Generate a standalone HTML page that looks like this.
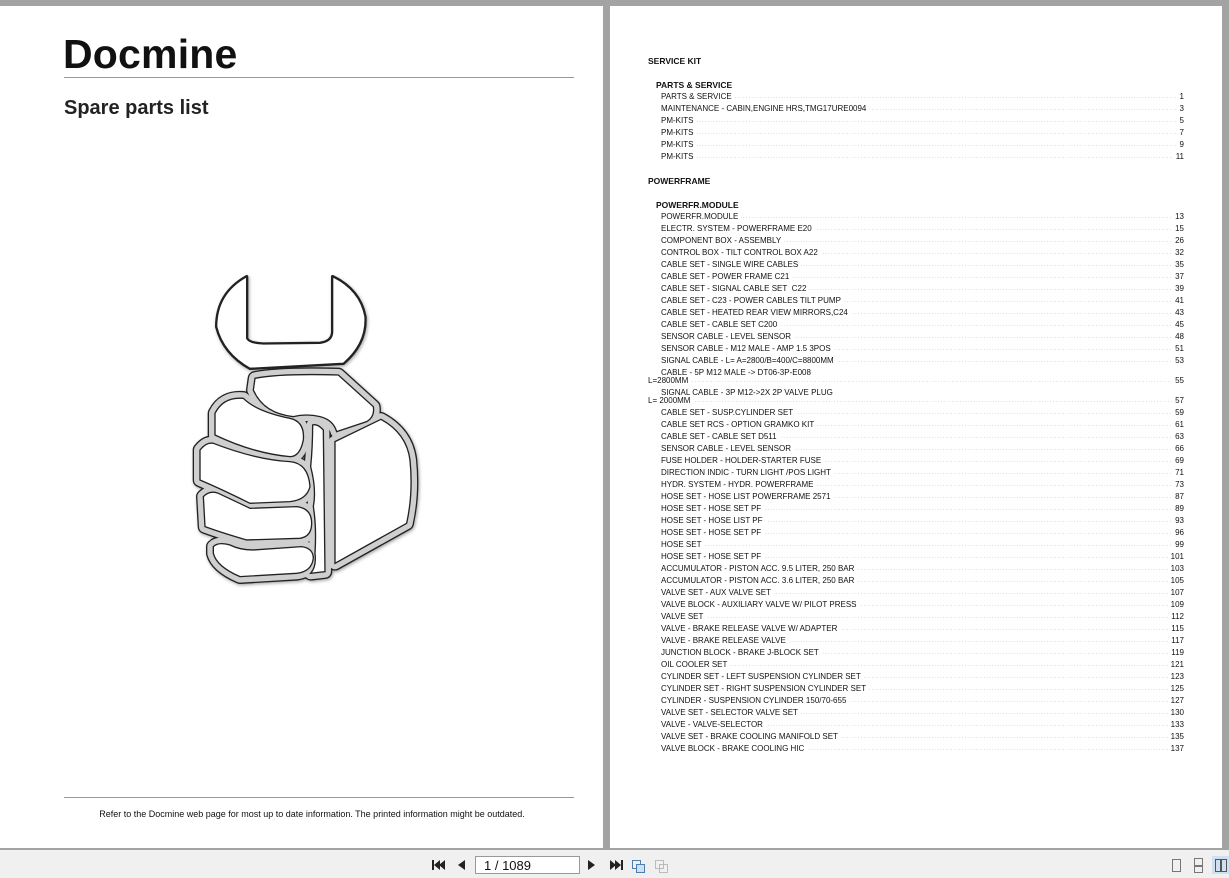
<!DOCTYPE html>
<html><head><meta charset="utf-8"><style>
*{margin:0;padding:0;box-sizing:border-box}
body{width:1229px;height:878px;background:#a3a3a3;position:relative;overflow:hidden;font-family:"Liberation Sans",Arial,sans-serif;color:#111}
.pg{position:absolute;background:#fff}
.t{position:absolute;font-size:8px;white-space:nowrap;line-height:10px}
.row{position:absolute;left:661px;width:523px;font-size:8px;line-height:10px;height:10px;overflow:hidden;white-space:nowrap}
.row .n{position:absolute;right:0;top:0;background:#fff;padding-left:3px}
.row .l{background:#fff;padding-right:3px;position:relative;z-index:1}
.row:before{content:". . . . . . . . . . . . . . . . . . . . . . . . . . . . . . . . . . . . . . . . . . . . . . . . . . . . . . . . . . . . . . . . . . . . . . . . . . . . . . . . . . . . . . . . . . . . . . . . . . . . . . . . . . . . . . . . . . . . . . . . . . . . . . . . . . . . . . . . . . . . . . . . . . . . . . . . . . . . . . . . . . . . . . . . . . . . . . . . . . . . . . . . . . . . . . . . . . .";position:absolute;left:0;top:0;color:#bbb;letter-spacing:-0.3px;font-size:6px}
.h{position:absolute;font-size:8.5px;font-weight:bold}
#tb{position:absolute;left:0;top:850px;width:1229px;height:28px;background:#f0f0f0}
</style></head><body>
<div class="pg" style="left:0;top:6px;width:603px;height:842px"></div>
<div class="pg" style="left:610px;top:6px;width:612px;height:842px"></div>

<div style="position:absolute;left:63px;top:31px;font-size:41px;font-weight:bold;letter-spacing:0.2px">Docmine</div>
<div style="position:absolute;left:64px;top:77px;width:510px;height:1px;background:#999"></div>
<div style="position:absolute;left:64px;top:97px;font-size:20px;font-weight:bold;color:#222">Spare parts list</div>
<div style="position:absolute;left:64px;top:797px;width:510px;height:1px;background:#999"></div>
<div style="position:absolute;left:0;width:624px;top:809px;font-size:9px;text-align:center">Refer to the Docmine web page for most up to date information. The printed information might be outdated.</div>

<svg style="position:absolute;left:0;top:0" width="603" height="848">
<defs>
<filter id="sh" x="-20%" y="-20%" width="140%" height="140%"><feDropShadow dx="3" dy="4" stdDeviation="5" flood-color="#000" flood-opacity="0.35"/></filter>
<g id="hand">
<path d="M225,355 Q300,340 475,345 L580,440 Q585,470 560,485 L470,515 Q460,480 420,470 Q380,460 340,470 Q250,460 220,390 Z"/>
<path d="M105,460 Q130,410 190,415 Q230,455 330,475 Q375,485 370,540 Q360,590 330,590 Q220,580 105,525 Z"/>
<path d="M60,570 Q80,545 100,550 Q230,600 330,605 Q385,610 390,680 Q380,720 330,725 L210,730 Q130,690 60,660 Z"/>
<path d="M70,710 Q90,690 115,700 Q200,740 210,745 L350,740 Q395,745 395,790 Q395,830 360,835 L200,840 Q130,820 75,800 Z"/>
<path d="M100,860 Q115,845 150,855 Q180,870 220,870 L365,860 Q400,865 400,895 Q395,935 350,940 L180,950 Q110,920 100,880 Z"/>
<path d="M398,495 Q412,490 430,510 L435,935 L392,940 Q410,920 405,880 Q410,800 400,740 Q410,690 392,620 Q398,560 398,495 Z"/>
<path d="M465,545 L603,478 Q680,520 690,600 Q700,700 680,790 L465,910 Z"/>
</g>
<path id="wr" d="M200,50 L200,235 Q205,250 250,252 L420,250 Q458,245 458,215 L458,50 Q540,90 555,170 Q560,250 490,310 L210,325 Q130,280 110,200 Q110,100 200,50 Z"/>
</defs>
<g transform="translate(180,260) scale(0.3333)">
<g filter="url(#sh)">
<use href="#hand" fill="#222" stroke="#222" stroke-width="44" stroke-linejoin="round"/>
<use href="#wr" fill="#222" stroke="#222" stroke-width="10" stroke-linejoin="round"/>
</g>
<use href="#hand" fill="#cfcfcf" stroke="#cfcfcf" stroke-width="36" stroke-linejoin="round"/>
<use href="#wr" fill="#fff" stroke="#222" stroke-width="4"/>
<use href="#hand" fill="#fff" stroke="#222" stroke-width="4"/>
</g></svg>

<div class="h" style="left:648px;top:56px">SERVICE KIT</div>
<div class="h" style="left:656px;top:80px">PARTS &amp; SERVICE</div>
<div class="h" style="left:648px;top:176px">POWERFRAME</div>
<div class="h" style="left:656px;top:200px">POWERFR.MODULE</div>

<div class="row" style="top:92px"><span class="l">PARTS &amp; SERVICE</span><span class="n">1</span></div>
<div class="row" style="top:104px"><span class="l">MAINTENANCE - CABIN,ENGINE HRS,TMG17URE0094</span><span class="n">3</span></div>
<div class="row" style="top:116px"><span class="l">PM-KITS</span><span class="n">5</span></div>
<div class="row" style="top:128px"><span class="l">PM-KITS</span><span class="n">7</span></div>
<div class="row" style="top:140px"><span class="l">PM-KITS</span><span class="n">9</span></div>
<div class="row" style="top:152px"><span class="l">PM-KITS</span><span class="n">11</span></div>

<div class="row" style="top:212px"><span class="l">POWERFR.MODULE</span><span class="n">13</span></div>
<div class="row" style="top:224px"><span class="l">ELECTR. SYSTEM - POWERFRAME E20</span><span class="n">15</span></div>
<div class="row" style="top:236px"><span class="l">COMPONENT BOX - ASSEMBLY</span><span class="n">26</span></div>
<div class="row" style="top:248px"><span class="l">CONTROL BOX - TILT CONTROL BOX A22</span><span class="n">32</span></div>
<div class="row" style="top:260px"><span class="l">CABLE SET - SINGLE WIRE CABLES</span><span class="n">35</span></div>
<div class="row" style="top:272px"><span class="l">CABLE SET - POWER FRAME C21</span><span class="n">37</span></div>
<div class="row" style="top:284px"><span class="l">CABLE SET - SIGNAL CABLE SET&nbsp; C22</span><span class="n">39</span></div>
<div class="row" style="top:296px"><span class="l">CABLE SET - C23 - POWER CABLES TILT PUMP</span><span class="n">41</span></div>
<div class="row" style="top:308px"><span class="l">CABLE SET - HEATED REAR VIEW MIRRORS,C24</span><span class="n">43</span></div>
<div class="row" style="top:320px"><span class="l">CABLE SET - CABLE SET C200</span><span class="n">45</span></div>
<div class="row" style="top:332px"><span class="l">SENSOR CABLE - LEVEL SENSOR</span><span class="n">48</span></div>
<div class="row" style="top:344px"><span class="l">SENSOR CABLE - M12 MALE - AMP 1.5 3POS</span><span class="n">51</span></div>
<div class="row" style="top:356px"><span class="l">SIGNAL CABLE - L= A=2800/B=400/C=8800MM</span><span class="n">53</span></div>
<div class="t" style="left:661px;top:368px">CABLE - 5P M12 MALE -&gt; DT06-3P-E008</div>
<div class="row" style="top:376px;left:648px;width:536px"><span class="l">L=2800MM</span><span class="n">55</span></div>
<div class="t" style="left:661px;top:388px">SIGNAL CABLE - 3P M12-&gt;2X 2P VALVE PLUG</div>
<div class="row" style="top:396px;left:648px;width:536px"><span class="l">L= 2000MM</span><span class="n">57</span></div>
<div class="row" style="top:408px"><span class="l">CABLE SET - SUSP.CYLINDER SET</span><span class="n">59</span></div>
<div class="row" style="top:420px"><span class="l">CABLE SET RCS - OPTION GRAMKO KIT</span><span class="n">61</span></div>
<div class="row" style="top:432px"><span class="l">CABLE SET - CABLE SET D511</span><span class="n">63</span></div>
<div class="row" style="top:444px"><span class="l">SENSOR CABLE - LEVEL SENSOR</span><span class="n">66</span></div>
<div class="row" style="top:456px"><span class="l">FUSE HOLDER - HOLDER-STARTER FUSE</span><span class="n">69</span></div>
<div class="row" style="top:468px"><span class="l">DIRECTION INDIC - TURN LIGHT /POS LIGHT</span><span class="n">71</span></div>
<div class="row" style="top:480px"><span class="l">HYDR. SYSTEM - HYDR. POWERFRAME</span><span class="n">73</span></div>
<div class="row" style="top:492px"><span class="l">HOSE SET - HOSE LIST POWERFRAME 2571</span><span class="n">87</span></div>
<div class="row" style="top:504px"><span class="l">HOSE SET - HOSE SET PF</span><span class="n">89</span></div>
<div class="row" style="top:516px"><span class="l">HOSE SET - HOSE LIST PF</span><span class="n">93</span></div>
<div class="row" style="top:528px"><span class="l">HOSE SET - HOSE SET PF</span><span class="n">96</span></div>
<div class="row" style="top:540px"><span class="l">HOSE SET</span><span class="n">99</span></div>
<div class="row" style="top:552px"><span class="l">HOSE SET - HOSE SET PF</span><span class="n">101</span></div>
<div class="row" style="top:564px"><span class="l">ACCUMULATOR - PISTON ACC. 9.5 LITER, 250 BAR</span><span class="n">103</span></div>
<div class="row" style="top:576px"><span class="l">ACCUMULATOR - PISTON ACC. 3.6 LITER, 250 BAR</span><span class="n">105</span></div>
<div class="row" style="top:588px"><span class="l">VALVE SET - AUX VALVE SET</span><span class="n">107</span></div>
<div class="row" style="top:600px"><span class="l">VALVE BLOCK - AUXILIARY VALVE W/ PILOT PRESS</span><span class="n">109</span></div>
<div class="row" style="top:612px"><span class="l">VALVE SET</span><span class="n">112</span></div>
<div class="row" style="top:624px"><span class="l">VALVE - BRAKE RELEASE VALVE W/ ADAPTER</span><span class="n">115</span></div>
<div class="row" style="top:636px"><span class="l">VALVE - BRAKE RELEASE VALVE</span><span class="n">117</span></div>
<div class="row" style="top:648px"><span class="l">JUNCTION BLOCK - BRAKE J-BLOCK SET</span><span class="n">119</span></div>
<div class="row" style="top:660px"><span class="l">OIL COOLER SET</span><span class="n">121</span></div>
<div class="row" style="top:672px"><span class="l">CYLINDER SET - LEFT SUSPENSION CYLINDER SET</span><span class="n">123</span></div>
<div class="row" style="top:684px"><span class="l">CYLINDER SET - RIGHT SUSPENSION CYLINDER SET</span><span class="n">125</span></div>
<div class="row" style="top:696px"><span class="l">CYLINDER - SUSPENSION CYLINDER 150/70-655</span><span class="n">127</span></div>
<div class="row" style="top:708px"><span class="l">VALVE SET - SELECTOR VALVE SET</span><span class="n">130</span></div>
<div class="row" style="top:720px"><span class="l">VALVE - VALVE-SELECTOR</span><span class="n">133</span></div>
<div class="row" style="top:732px"><span class="l">VALVE SET - BRAKE COOLING MANIFOLD SET</span><span class="n">135</span></div>
<div class="row" style="top:744px"><span class="l">VALVE BLOCK - BRAKE COOLING HIC</span><span class="n">137</span></div>

<div id="tb"></div>
<svg style="position:absolute;left:0;top:850px" width="1229" height="28">
<g fill="#222">
<rect x="432" y="10" width="2" height="10"/><path d="M440,10 L434,15 L440,20Z M445,10 L439,15 L445,20Z"/>
<path d="M465,10 L458,15 L465,20Z"/>
<path d="M588,10 L595,15 L588,20Z"/>
<path d="M610,10 L616,15 L610,20Z M615,10 L621,15 L615,20Z"/><rect x="621" y="10" width="2" height="10"/>
<path d="M573,14 L579,14 L576,17Z" fill="#444"/>
</g>
<rect x="475.5" y="6.5" width="104" height="17" fill="#fff" stroke="#999"/>
<text x="484" y="20" font-family="Liberation Sans" font-size="13" fill="#111">1 / 1089</text>
<g fill="none" stroke="#4a7fb0"><rect x="632.5" y="10.5" width="8" height="8"/><rect x="636.5" y="14.5" width="8" height="8" fill="#cfe0ef"/></g>
<g fill="none" stroke="#bbb"><rect x="655.5" y="10.5" width="8" height="8"/><rect x="659.5" y="14.5" width="8" height="8"/></g>
<g fill="none" stroke="#777"><rect x="1172.5" y="9.5" width="8" height="12"/><rect x="1194.5" y="8.5" width="8" height="7"/><rect x="1194.5" y="16.5" width="8" height="6"/></g>
<rect x="1212" y="6" width="17" height="18" fill="#cfe0f2"/>
<g fill="none" stroke="#555"><rect x="1215.5" y="9.5" width="5" height="12"/><rect x="1221.5" y="9.5" width="5" height="12"/></g>
</svg>
</body></html>
